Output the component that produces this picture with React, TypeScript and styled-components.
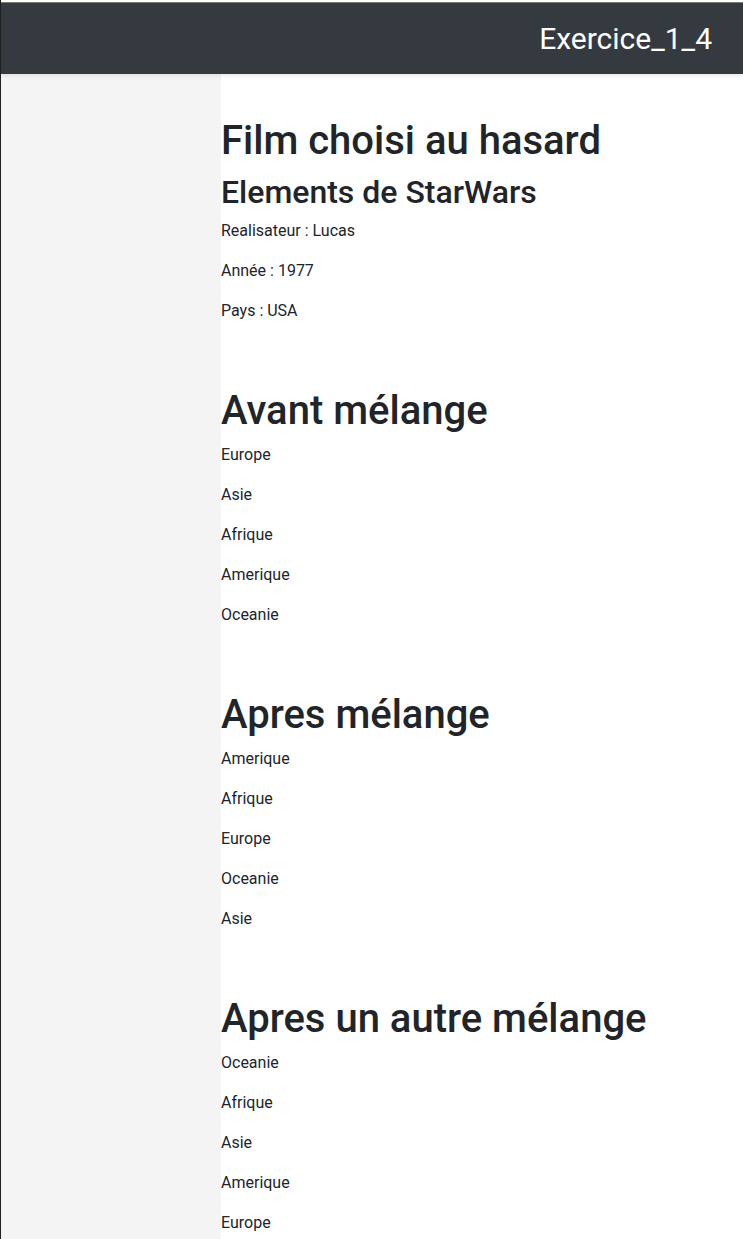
import React from "react";
import styled, { createGlobalStyle } from "styled-components";

const Global = createGlobalStyle`
  html, body { margin: 0; padding: 0; background: #ffffff; }
  body {
    font-family: Roboto, "Liberation Sans", sans-serif;
    font-size: 16px;
    line-height: 1.5;
    color: #212529;
  }
  * { box-sizing: border-box; }
`;

const Page = styled.div`
  min-height: 1239px;
  padding-top: 2px;
  border-left: 1px solid #222;
  display: flex;
  flex-direction: column;
`;

const TopBar = styled.header`
  height: 72px;
  background: #343a40;
  border-top: 1px solid #7a7a7a;
  display: flex;
  align-items: center;
  justify-content: flex-end;
  padding-right: 31px;
  box-shadow: 0 2px 4px rgba(0, 0, 0, 0.08);
  position: relative;
  z-index: 1;
`;

const Title = styled.span`
  color: #ffffff;
  font-size: 30px;
  font-weight: 400;
  line-height: 1;
`;

const Body = styled.div`
  flex: 1;
  display: flex;
`;

const Sidebar = styled.aside`
  width: 220px;
  flex: none;
  background: #f4f4f4;
`;

const Main = styled.main`
  flex: 1;
  padding-top: 43px;
  display: flex;
  flex-direction: column;
  gap: 48px;
`;

const Section = styled.section``;

const H1 = styled.h1`
  margin: 0 0 8px;
  font-size: 40px;
  font-weight: 500;
  line-height: 1.2;
`;

const H2 = styled.h2`
  margin: 0 0 8px;
  font-size: 32px;
  font-weight: 500;
  line-height: 1.2;
`;

const P = styled.p`
  margin: 0 0 16px;
  font-size: 16px;
  line-height: 24px;
`;

const lists: { title: string; items: string[] }[] = [
  { title: "Avant mélange", items: ["Europe", "Asie", "Afrique", "Amerique", "Oceanie"] },
  { title: "Apres mélange", items: ["Amerique", "Afrique", "Europe", "Oceanie", "Asie"] },
  { title: "Apres un autre mélange", items: ["Oceanie", "Afrique", "Asie", "Amerique", "Europe"] },
];

export default function App() {
  return (
    <>
      <Global />
      <Page>
        <TopBar>
          <Title>Exercice_1_4</Title>
        </TopBar>
        <Body>
          <Sidebar />
          <Main>
            <Section>
              <H1>Film choisi au hasard</H1>
              <H2>Elements de StarWars</H2>
              <P>Realisateur : Lucas</P>
              <P>Année : 1977</P>
              <P>Pays : USA</P>
            </Section>
            {lists.map((l) => (
              <Section key={l.title}>
                <H1>{l.title}</H1>
                {l.items.map((it) => (
                  <P key={it}>{it}</P>
                ))}
              </Section>
            ))}
          </Main>
        </Body>
      </Page>
    </>
  );
}
